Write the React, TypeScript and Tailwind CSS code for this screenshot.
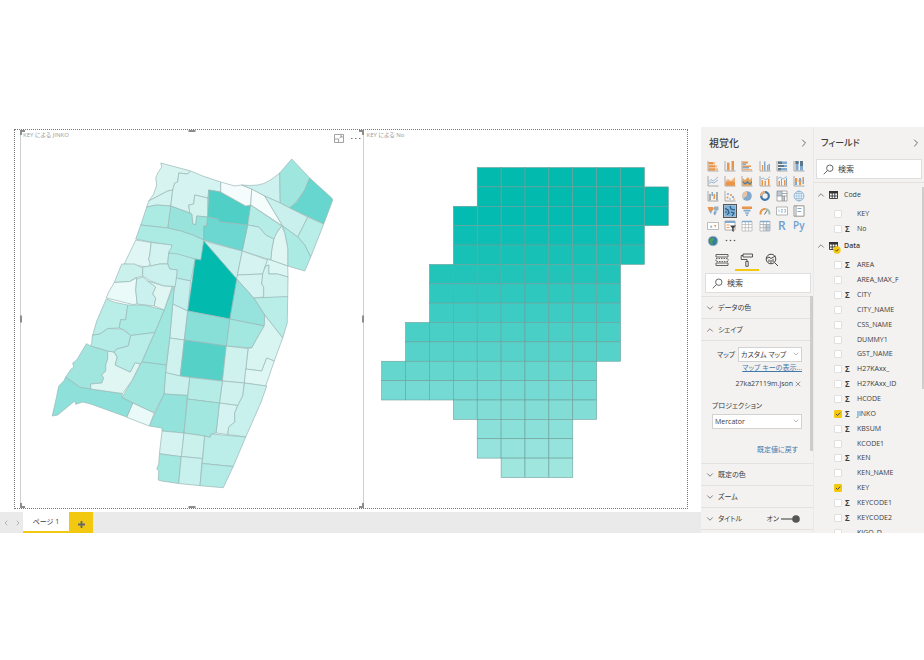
import type { ReactNode } from "react";
import { ChevronDown, ChevronLeft, ChevronRight, ChevronUp, X } from "lucide-react";

type Region = [fill: string, points: string];

// Town blocks, coloured by population
const regions: Region[] = [
  ["#d8f4f1", "160,163 190,171 187,174 178,173 177,182 174,183 172,190 167,191 148,201 153,194 156,185 155,178 157,173 161,167"],
  ["#d3f3f0", "148,201 167,191 172,190 170,206 156,205 146,207"],
  ["#d5f3f0", "190,171 202,176 220,182 220,192 208,190 207,198 194,195 193,204 188,205 189,213 170,206 172,190 174,183 177,182 178,173 187,174"],
  ["#d3f3ef", "194,195 207,198 207,217 196,216 195,225 192,224 191,214 189,213 188,205 193,204"],
  ["#98e4dd", "170,206 189,213 191,214 192,224 195,225 196,216 207,217 206,226 203,226 203,240 192,235 180,231 167,228 168,220"],
  ["#acebe4", "146,207 156,205 170,206 168,220 167,228 140,225 142,219"],
  ["#acebe4", "140,225 167,228 180,231 192,235 203,240 201,260 194,259 167,253 171,246 171,245 150,242 135,239"],
  ["#4fcfc6", "208,190 220,192 245,206 250,205 247,225 219,222 217,219 207,217"],
  ["#f5fcfc", "220,182 234,186 241,185 251,189 250,205 245,206 220,192"],
  ["#f5fcfc", "251,189 264,196 282,226 250,205"],
  ["#cdf1ee", "241,185 249,185.500 257,185 263,183.500 268,181 274,177 279,173 279.5,203 264,196 251,189"],
  ["#9fe6df", "279,173 291,159 309,178 304,190 296,201 289,208 279.5,203"],
  ["#66d6ce", "309,178 331,198 332,200 323,224 289,208 296,202 304,190"],
  ["#c9f0ed", "264,196 279.5,203 289,208 307,217 297,237 282,226"],
  ["#b9ede8", "307,217 323,224 310,257 304,245 297,237"],
  ["#acebe4", "282,226 297,237 304,245 310,257 304,271 287,266 287,248 284,233"],
  ["#dff6f3", "281,226 284,233 287,248 287,266 270,260 271,250 274,235"],
  ["#b5ece6", "250,205 281,226 277,231 273,239 265,235 258,227 247,225"],
  ["#c6f0ec", "247,225 258,227 265,235 273,239 271,250 270,260 241.5,251"],
  ["#6bd7d0", "207,217 217,219 219,222 247,225 241.5,251 203,240 203,226 206,226"],
  ["#e0f6f4", "135,240 150.5,242.5 149,255 148,259 150,264 146,267 134,265 123.5,264"],
  ["#d3f3f0", "150.5,242.5 171,245 171,247 168,252 167,264 159,264 150,266 148,259 149,255"],
  ["#b3ebe6", "168,253 177,254 194.5,259 190,281 175.5,278 176.5,270 169,269 167,264"],
  ["#c5efec", "175.5,278 190,281 187,311 172,304 173,292"],
  ["#d5f3f0", "172,304 187,311 183.5,340 169,338"],
  ["#cff2ee", "169,338 183.5,340 179.5,376 165,373"],
  ["#c6f0ec", "203,241 241.5,251 236,279"],
  ["#d5f3f0", "241.5,251 267,260 264,268 262,274 236.7,275"],
  ["#d5f3f0", "236.7,275 262,274 261,284 263,287 263,297 253,298 236,279"],
  ["#dcf6f3", "267,259 287,266 287.3,277 277,274 268,274 268,265 265,266 264,268"],
  ["#cff2ef", "264,268 265,266 268,265 268,274 277,274 287.3,277 287,297 263,298 263,287 261,284 262,274"],
  ["#b9ede8", "253,298 287,296.5 286.5,323 282,338 264,315"],
  ["#95e3dc", "236,279 253,298 264,315 264,326 229,319"],
  ["#a3e7e1", "229,319 263.5,326 257,337 251,348 225.5,346"],
  ["#d8f5f2", "264,315 282,338 273.5,361 266,358 261,371 245,369 247.5,348 251,348 257,337 263.5,326"],
  ["#02baae", "203,241 236,279 229,319 187,311 194.5,259 200,260"],
  ["#88dfd8", "187,311 229,319 225.5,346 183.7,340"],
  ["#55d1c8", "183.7,340 225.5,346 221.7,381 179.5,376"],
  ["#cff2ee", "225.5,346 247.3,348.5 243.7,383 221.7,381"],
  ["#dff7f4", "245,369 261,371 266,358 273.5,361 265,386 243.7,383"],
  ["#cff2ee", "221.7,381 243.7,383 242,396 237,405.5 218.7,403"],
  ["#d5f3f0", "218.7,403 237,405.5 234,413 234,422 228,427 227,434.5 215.3,433"],
  ["#c8f0ec", "243.7,383 266,386 260,403 245,437 227,434.5 228,427 234,422 234,413 237,405.5 242,396"],
  ["#b5ece6", "189,377.5 221.7,381 218.7,403 186.7,399"],
  ["#c8f0ec", "164.7,372.5 179.5,376 189,377.5 186.7,395.5 163.3,394"],
  ["#93e2db", "163.3,394 186.7,395.5 183.3,433 161.3,431 161.3,428 148.5,426"],
  ["#a1e7e0", "186.7,399 218.7,403 215.3,433 210.5,434 209.5,437.3 204,436 183.3,433"],
  ["#d5f3f0", "161.3,431 183.3,433 180.7,457 158.7,453.5"],
  ["#cbf1ed", "183.3,433 204,436 201.7,458.5 180.7,456.5"],
  ["#a3e7e1", "158.7,454 180.5,456.5 178,483.5 161,481 157.5,480 158,471 156,469 158,464"],
  ["#c8f0ec", "180.5,456.5 201.5,458.5 199.3,485.7 178,483.5"],
  ["#bbede9", "204,436 209.5,437.3 210.5,434 245,437 232.5,466.5 201.5,463.5"],
  ["#b3ebe6", "201.5,463.5 232.5,466.5 222.5,487.7 199.3,485.7"],
  ["#9fe6df", "174,282 172,304 169,338 165.5,365 141,362 154,332.5 163.5,310"],
  ["#9fe6df", "141,362 165.5,365 163.3,394 153.5,413 121.3,397.5 131,381"],
  ["#e9faf8", "132,403 153.5,413 148.5,426 126,417.3"],
  ["#8ee1da", "65,377 79,387 90,389 121.7,393.5 121,397.5 132,403 126,417 90,404 82,402 75,404.3 74,401 57,415 51.5,416 56,396 58,386 63,381"],
  ["#a0e6df", "85.7,343.7 90,346 107,351 107,359 105,365 105,371 101,375 103,378 101,383 90,384 90,389 79,387 65,377 70,369.5 73,367 72,363 76,360"],
  ["#dff6f3", "107,351 113,352 116.5,357 114.5,365 129.5,372 134.5,362.5 139.5,364 131,381 121.7,393.5 90,389 90,384 101,383 103,378 101,375 105,371 105,365 107,359"],
  ["#b3ebe6", "91.7,335 99,334 107,328.5 121,329 130,335.5 127.5,346 116,349 114,352 107,351 90,346 91,343"],
  ["#b9ede8", "105.5,299 113,302 127,305 125,320 120,319.5 118.5,328 107,328.5 99,334 92,335 96,321"],
  ["#acebe4", "127,305 143,305 163.5,310 154,332.5 130,335.5 124,330 118.5,328 120,319.5 125,320"],
  ["#b9ede8", "130,335.5 154,332.5 141,362 139.5,364 134.5,362.5 129.5,372 114.5,365 116.5,357 113.5,352 116,349 127.5,346"],
  ["#cbf1ed", "121,264 134,264 142,268 142,276 134,278 129,281.5 113.5,282.5"],
  ["#cbf1ee", "142,267 150,266 159,264 167,264 169,269 176.5,270 174.5,286.5 163,286 150,281 142,276"],
  ["#e9faf8", "113.5,282.5 129,281.5 136,278 135,290 136.5,304 132,304.5 118,301 105.5,298 108,292"],
  ["#cbf1ee", "136,279 142,277 155,287 152,294 155,298 153.5,306 136.5,304 135,290"],
  ["#dff6f3", "147,281 163,286 171.5,286.5 163.5,310 153.5,306 155,298 152,294 155,287"],
];

// Mesh map: fill, first column and one past the last column of each row
const meshRows: [string, number, number][] = [
  ["#02baae", 4, 11],
  ["#02baae", 4, 12],
  ["#03bbb0", 3, 12],
  ["#0cbeb3", 3, 11],
  ["#17c1b6", 3, 11],
  ["#22c4ba", 2, 10],
  ["#2fc8bf", 2, 10],
  ["#3dccc3", 2, 10],
  ["#4acfc6", 1, 10],
  ["#56d2ca", 1, 10],
  ["#65d6ce", 0, 9],
  ["#74dad3", 0, 9],
  ["#81ddd6", 3, 9],
  ["#8be0da", 4, 8],
  ["#95e3dc", 4, 8],
  ["#9fe6df", 5, 8],
];

const O = "#e8954a";
const B = "#7fa9cf";
const G = "#9a9a9a";
const axis = <path d="M1 1V11H11.500" fill="none" stroke={G} strokeWidth=".8" />;

const vizIcons: { name: string; art: ReactNode }[] = [
  { name: "積み上げ横棒グラフ", art: <>{axis}<path d="M1.500 2H6V4.500H1.500zM1.500 5.200H8V7.500H1.500zM1.500 8.200H8V10.500H1.500z" fill={O} /><path d="M6 2H8V4.500H6zM8 5.200H10V7.500H8zM8 8.200H11V10.500H8z" fill="#f2bd8d" /></> },
  { name: "積み上げ縦棒グラフ", art: <>{axis}<path d="M3 4H5.500V10.500H3zM7.500 1H10V7H7.500z" fill={O} /><path d="M3 2.500H5.500V4H3zM7.500 7H10V10.500H7.500z" fill="#c9a27a" /></> },
  { name: "集合横棒グラフ", art: <>{axis}<path d="M1.500 1.500H7V3.500H1.500zM1.500 5.500H10V7H1.500z" fill={O} /><path d="M1.500 3.500H5V5H1.500zM1.500 7H8V8.500H1.500z" fill={B} /><path d="M1.500 9H11V10.300H1.500z" fill="#f0b27b" /></> },
  { name: "集合縦棒グラフ", art: <>{axis}<path d="M3 5H4.200V10.500H3zM8 5H9.200V10.500H8z" fill={O} /><path d="M5 1.500H6.500V10.500H5zM9.500 4H11V10.500H9.500z" fill={B} /></> },
  { name: "100% 積み上げ横棒グラフ", art: <>{axis}<path d="M2 1.500H11V4H2zM2 5H11V7H2zM2 8H11V10.300H2z" fill={B} /><path d="M2 1.500H6V4H2zM2 5H8V7H2zM2 8H5V10.300H2z" fill="#5d7688" /></> },
  { name: "100% 積み上げ縦棒グラフ", art: <>{axis}<path d="M2.500 1H5.500V10.500H2.500zM7 1H10V10.500H7z" fill={B} /><path d="M2.500 1H5.500V4H2.500zM7 1H10V6H7z" fill="#5d7688" /></> },
  { name: "折れ線グラフ", art: <>{axis}<path d="M1.500 7L4 4.500 6.500 6 11 2M1.500 9L4 7 7 8 11 5" fill="none" stroke={B} strokeWidth=".8" /></> },
  { name: "面グラフ", art: <>{axis}<path d="M1.500 6L4 4 7 6 11 2V8H1.500z" fill="#f0b27b" /><path d="M1.500 7.500Q6 6 11 7V10.700H1.500z" fill={O} /></> },
  { name: "積み上げ面グラフ", art: <>{axis}<path d="M1.500 3L4 5 7 2 9 5 11 2V10.700H1.500z" fill="#e3a45f" /><path d="M1.500 6L4 8 6.500 6 9 8.500 11 6V7.500L9 10 6.500 8 4 9.500 1.500 7.500z" fill="#507b9e" /></> },
  { name: "折れ線および積み上げ縦棒グラフ", art: <>{axis}<path d="M2.500 5H4V10.500H2.500zM5.500 6H7V10.500H5.500zM9 4H10.500V10.500H9z" fill={O} /><path d="M1.500 4L4 3 7 5 11 1.500" fill="none" stroke={B} strokeWidth=".8" /></> },
  { name: "折れ線および集合縦棒グラフ", art: <>{axis}<path d="M2.500 6H4V10.500H2.500zM8 5H9.500V10.500H8z" fill={O} /><path d="M5 4H6V10.500H5zM10 3H11V10.500H10z" fill={B} /><path d="M1.500 4L4 2 7 4 11 1.500" fill="none" stroke={B} strokeWidth=".8" /></> },
  { name: "リボン グラフ", art: <>{axis}<path d="M2 3H4V7H2zM6 6H8V10H6zM9.500 2H11V5H9.500z" fill={O} /><path d="M2 7H4V10H2zM6 3H8V6H6zM9.500 5H11V9H9.500z" fill={B} /><path d="M4 4L6 7M8 7L9.500 4" stroke="#f2bd8d" /></> },
  { name: "ウォーターフォール図", art: <>{axis}<path d="M2 4H4V10.500H2zM9 2H11V10.500H9z" fill="#a3adb3" /><path d="M4.500 2H6V6H4.500z" fill={B} /><path d="M6.500 4H8V9H6.500z" fill={O} /></> },
  { name: "散布図", art: <>{axis}<g fill={B}><circle cx="4" cy="4" r="1" /><circle cx="9" cy="7" r="1.100" /><circle cx="6" cy="9" r=".8" /></g><g fill={O}><circle cx="3.500" cy="7.500" r="1" /><circle cx="7" cy="5" r="1" /><circle cx="10" cy="9" r=".8" /></g></> },
  { name: "円グラフ", art: <><circle cx="6" cy="6" r="4.800" fill={B} /><path d="M6 6V1.200A4.800 4.800 0 0 0 2 8.600z" fill="#ecc3a0" /></> },
  { name: "ドーナツ グラフ", art: <><circle cx="6" cy="6" r="3.800" fill="none" stroke="#3f78aa" strokeWidth="2.200" /><path d="M6 2.200A3.800 3.800 0 0 0 2.200 6" fill="none" stroke="#eab17e" strokeWidth="2.200" /></> },
  { name: "ツリーマップ", art: <><path d="M1 1H11V11H1z" fill="#fff" /><path d="M1 1H6V6H1zM6 6H8.500V11H6z" fill="#b9c9d8" /><path d="M1 1H11V11H1zM1 6H11M6 1V11M8.500 6V11M6 3.500H11" fill="none" stroke="#8a8a8a" strokeWidth=".7" /></> },
  { name: "マップ", art: <><circle cx="6" cy="6" r="4.900" fill="#eef5fa" stroke={B} strokeWidth=".8" /><path d="M1.300 6H10.700M6 1.300V10.700M2 3.500H10M2 8.500H10" stroke={B} strokeWidth=".5" /><ellipse cx="6" cy="6" rx="2.400" ry="4.900" fill="none" stroke={B} strokeWidth=".5" /></> },
  { name: "塗り分け地図", art: <><path d="M.5 2H6L7 4 5 6 2 6z" fill={O} /><path d="M2 6H5L4 9z" fill={B} /><path d="M7 1.500H11.500V5L9 6 7 5z" fill="#9bb0bf" /><path d="M7 6L10 6.500 8 10.500 6.500 9z" fill={B} /></> },
  { name: "図形マップ", art: <><path d="M.5 .5H11.500V11.500H.5z" fill="#7ab0dc" /><path d="M1 3.500L4 5 5 8 3 9.500M6 1L7 4 11 5M7 7L10 8 8 11M1 7H3" fill="none" stroke="#2d5474" strokeWidth="1.100" /></> },
  { name: "じょうごグラフ", art: <><path d="M1 1.500H11V4H1z" fill={O} /><path d="M2.500 4.700H9.500V6.500H2.500z" fill={B} /><path d="M4 7.200H8V8.700H4zM5 9.300H7V11H5z" fill="#8fb3d1" /></> },
  { name: "ゲージ", art: <><path d="M1.700 9.500A4.300 4.300 0 0 1 6 4" fill="none" stroke={O} strokeWidth="2" /><path d="M6 4A4.300 4.300 0 0 1 10.300 9.500" fill="none" stroke="#9fc0b0" strokeWidth="2" /><path d="M5.500 9.500L8 5.500" stroke="#555" strokeWidth=".9" /></> },
  { name: "カード", art: <><path d="M.5 2H11.500V10H.5z" fill="#fff" stroke="#9a9a9a" strokeWidth=".7" /><path d="M3 4.500V7M5 4.500H6.800L5 7H7M8 4.500H9.500V7H8" fill="none" stroke={B} strokeWidth=".7" /></> },
  { name: "複数の行カード", art: <><path d="M1 .8H11V11.200H1z" fill="#fff" stroke="#8a8a8a" strokeWidth=".9" /><path d="M3 .8V11.200" stroke="#8a8a8a" strokeWidth=".9" /><path d="M4.500 3.500H8.500M4.500 6.500H8" stroke={B} /></> },
  { name: "KPI", art: <><path d="M.5 2.500H11.500V9.500H.5z" fill="#fff" stroke="#a5a5a5" strokeWidth=".7" /><path d="M2.800 7.500L4.200 5 5.500 7.500z" fill={B} /><path d="M7 5L8.200 7.500 9.400 5z" fill={O} /></> },
  { name: "スライサー", art: <><path d="M1 1H11V10H1z" fill="#fff" stroke={G} strokeWidth=".8" /><path d="M1 1H11V3H1z" fill={B} /><path d="M2.500 5H5.500M2.500 7.500H5.500" stroke={O} /><path d="M6 5.500H12L9.700 8.200V12L8.200 11V8.200z" fill="#444" /></> },
  { name: "テーブル", art: <><path d="M1 1.500H11V11H1zM1 4.500H11M1 7.700H11M4.300 1.500V11M7.600 1.500V11" fill="#fff" stroke="#b0b0b0" strokeWidth=".7" /><path d="M1 .8H11V2.200H1z" fill={B} /></> },
  { name: "マトリックス", art: <><path d="M1 1.500H11V11H1z" fill="#fff" /><path d="M5.500 4.500H11V11H5.500z" fill="#b7d3ea" /><path d="M1 1.500H11V11H1zM1 4.500H11M1 7.700H11M4.300 1.500V11M7.600 1.500V11" fill="none" stroke="#a3a3a3" strokeWidth=".7" /><path d="M1 .8H11V2.200H1z" fill={B} /></> },
  { name: "R スクリプト", art: <text x="2" y="10" className="font-['Open_Sans',sans-serif] text-[12px] font-semibold" fill="#6f9fd0">R</text> },
  { name: "Python スクリプト", art: <text x="0" y="9" className="font-['Open_Sans',sans-serif] text-[10px] font-semibold" fill="#6f9fd0">Py</text> },
  { name: "ArcGIS Maps", art: <><circle cx="6" cy="6" r="4.800" fill="#3679a5" stroke="#a8bcc6" strokeWidth=".8" /><path d="M3 3.500L6.500 2.500 7.500 5 5 6.500 6 9 4 9.500 2.500 6zM8 6L10 5.500 9 8.500z" fill="#4d9e5e" /></> },
  { name: "その他", art: <g fill="#555"><circle cx="2.500" cy="5.500" r=".8" /><circle cx="6.500" cy="5.500" r=".8" /><circle cx="10.500" cy="5.500" r=".8" /></g> },
];

type Field = { name: string; sum?: boolean; on?: boolean };

const codeFields: Field[] = [{ name: "KEY" }, { name: "No", sum: true }];

const dataFields: Field[] = [
  { name: "AREA", sum: true },
  { name: "AREA_MAX_F" },
  { name: "CITY", sum: true },
  { name: "CITY_NAME" },
  { name: "CSS_NAME" },
  { name: "DUMMY1" },
  { name: "GST_NAME" },
  { name: "H27KAxx_", sum: true },
  { name: "H27KAxx_ID", sum: true },
  { name: "HCODE", sum: true },
  { name: "JINKO", sum: true, on: true },
  { name: "KBSUM", sum: true },
  { name: "KCODE1" },
  { name: "KEN", sum: true },
  { name: "KEN_NAME" },
  { name: "KEY", on: true },
  { name: "KEYCODE1", sum: true },
  { name: "KEYCODE2", sum: true },
  { name: "KIGO_D" },
];

const SearchBox = ({ label }: { label: string }) => (
  <label className="flex h-5 items-center gap-1 border border-[#dedede] bg-white px-1.5">
    <svg viewBox="0 0 11 11" className="size-[11px] shrink-0" fill="none" stroke="#555" strokeWidth=".9" aria-hidden="true">
      <circle cx="6.800" cy="4.200" r="3.200" />
      <path d="M4.500 6.500L.7 10.300" />
    </svg>
    <input
      type="search"
      aria-label={label}
      placeholder="検索"
      className="w-full min-w-0 bg-transparent text-[8px] leading-3 outline-none placeholder:text-[#444]"
    />
  </label>
);

const FieldRow = ({ field, table }: { field: Field; table: string }) => {
  const id = `${table}-${field.name}`;
  return (
    <li className="flex items-center pl-5">
      <span className="relative flex size-2">
        <input
          id={id}
          type="checkbox"
          defaultChecked={field.on}
          className="peer size-2 appearance-none rounded-[1px] border border-[#e0e0e0] bg-white checked:border-[#f2c811] checked:bg-[#f2c811]"
        />
        <svg viewBox="0 0 8 8" className="pointer-events-none absolute inset-0 hidden size-2 peer-checked:block" aria-hidden="true">
          <path d="M2 4L3.500 5.500 6.200 2.700" fill="none" stroke="#444" strokeWidth=".9" />
        </svg>
      </span>
      <span className="w-[15px] pl-[3px] text-[8px] font-bold leading-3" aria-hidden="true">{field.sum && "Σ"}</span>
      <label htmlFor={id} className="text-[7px] leading-3">{field.name}</label>
    </li>
  );
};

const TableHeading = ({ name, used }: { name: string; used?: boolean }) => (
  <button type="button" aria-expanded="true" className="flex w-full items-center pl-0.5 text-[7px] leading-3">
    <ChevronUp className="size-2.5" strokeWidth={1.5} aria-hidden="true" />
    <span className="relative ml-[3px] mr-1.5">
      <svg viewBox="0 0 9 8" className="h-2 w-[9px]" aria-hidden="true">
        <path d="M.5 .5H8.500V7.500H.5zM.5 5H8.500M3.200 2V7.500M5.800 2V7.500" fill="#fff" stroke="#333" strokeWidth=".9" />
        <path d="M0 0H9V2.500H0z" fill="#333" />
      </svg>
      {used && (
        <svg viewBox="0 0 8 8" className="absolute left-1 top-1 size-2" aria-hidden="true">
          <circle cx="4" cy="4" r="3.700" fill="#f2c811" />
          <path d="M2.500 4L3.600 5.200 5.600 3" fill="none" stroke="#444" strokeWidth=".9" />
        </svg>
      )}
    </span>
    <span className={used ? "font-semibold" : ""}>{name}</span>
  </button>
);

const Section = ({ title, open, children }: { title: string; open?: boolean; children?: ReactNode }) => (
  <div className="flex h-[22px] shrink-0 items-center justify-between border-t border-[#e3e2e1] pl-1 pr-3">
    <button type="button" aria-expanded={!!open} className="flex items-center gap-[3px] text-[7px] leading-3">
      {open ? <ChevronUp className="size-2.5" strokeWidth={1.5} /> : <ChevronDown className="size-2.5" strokeWidth={1.5} />}
      {title}
    </button>
    {children}
  </div>
);

const SelectBox = ({ id, value }: { id: string; value: string }) => (
  <div className="relative min-w-0 flex-1">
    <select id={id} defaultValue={value} className="block h-[15px] w-full appearance-none border border-[#d2d2d2] bg-white pl-0.5 pr-3 text-[7px] leading-3">
      <option>{value}</option>
    </select>
    <ChevronDown className="pointer-events-none absolute right-0.5 top-[3px] size-2 text-[#777]" strokeWidth={1.5} aria-hidden="true" />
  </div>
);

const Handles = () => (
  <div className="pointer-events-none absolute -inset-x-px inset-y-0" aria-hidden="true">
    <i className="absolute left-0 top-0 size-[5px] border-l-2 border-t-2 border-[#8c8c8c]" />
    <i className="absolute right-0 top-0 size-[5px] border-r-2 border-t-2 border-[#8c8c8c]" />
    <i className="absolute bottom-0 left-0 size-[5px] border-b-2 border-l-2 border-[#8c8c8c]" />
    <i className="absolute bottom-0 right-0 size-[5px] border-b-2 border-r-2 border-[#8c8c8c]" />
    <i className="absolute left-1/2 top-0 h-0.5 w-[7px] -translate-x-1/2 bg-[#8c8c8c]" />
    <i className="absolute bottom-0 left-1/2 h-0.5 w-[7px] -translate-x-1/2 bg-[#8c8c8c]" />
    <i className="absolute left-0 top-1/2 h-[7px] w-0.5 -translate-y-1/2 bg-[#8c8c8c]" />
    <i className="absolute right-0 top-1/2 h-[7px] w-0.5 -translate-y-1/2 bg-[#8c8c8c]" />
  </div>
);

const Canvas = () => (
  <div className="flex min-h-0 flex-1 border border-dotted border-[#777] pl-[5px]">
    <section className="relative flex min-w-0 flex-[344] flex-col border-x border-[#cfcfcf]">
      <Handles />
      <header className="flex h-4 items-start justify-between pl-0.5 pr-0.5">
        <h2 className="text-[6px] leading-[10px] text-[#9a9a9a]">KEY による JINKO</h2>
        <div className="flex items-center gap-[7px] pt-1">
          <button type="button" aria-label="フォーカス モード">
            <svg viewBox="0 0 10 9" className="h-[9px] w-2.5" aria-hidden="true">
              <path d="M.5 .5H9.500V8.500H.5zM.5 5H4.500V8.500M5.500 4L8 2M6 2H8V4" fill="none" stroke="#999" strokeWidth=".9" />
            </svg>
          </button>
          <button type="button" aria-label="その他のオプション">
            <svg viewBox="0 0 10 3" className="h-[3px] w-2.5" aria-hidden="true">
              <path d="M0 1.500H1.500M4 1.500H5.500M8 1.500H9.500" stroke="#777" strokeWidth="1.200" />
            </svg>
          </button>
        </div>
      </header>
      <svg viewBox="21 146 341 362" className="min-h-0 w-full flex-1" role="img" aria-label="KEY による JINKO">
        <g stroke="#9ab8b6" strokeWidth=".7" strokeLinejoin="round">
          {regions.map(([fill, points], i) => (
            <polygon key={i} fill={fill} points={points} />
          ))}
        </g>
      </svg>
    </section>
    <section className="flex min-w-0 flex-[324] flex-col">
      <header className="h-4 pl-0.5">
        <h2 className="text-[6px] leading-[10px] text-[#9a9a9a]">KEY による No</h2>
      </header>
      <svg viewBox="364 147 323 362" className="min-h-0 w-full flex-1" role="img" aria-label="KEY による No">
        <g stroke="#6f9f9b" strokeWidth=".6">
          {meshRows.map(([fill, from, to], row) =>
            Array.from({ length: to - from }, (_, i) => (
              <rect
                key={`${row}-${i}`}
                x={381.7 + (from + i) * 23.92}
                y={168.3 + row * 19.4}
                width="23.920"
                height="19.400"
                fill={fill}
              />
            ))
          )}
        </g>
      </svg>
    </section>
  </div>
);

const PageTabs = () => (
  <nav className="flex h-[21px] bg-[#eaeaea]" aria-label="ページ">
    <div className="flex w-[23px] items-center justify-center gap-1 text-[#999]">
      <button type="button" aria-label="前のページ"><ChevronLeft className="size-2" /></button>
      <button type="button" aria-label="次のページ"><ChevronRight className="size-2" /></button>
    </div>
    <button type="button" className="w-[46px] border-b-2 border-[#f2c811] bg-white text-[7px] leading-3">ページ 1</button>
    <button type="button" aria-label="新しいページ" className="flex w-6 items-center justify-center bg-[#f2c811] pt-1">
      <svg viewBox="0 0 7 7" className="size-[7px]" aria-hidden="true">
        <path d="M3.500 0V7M0 3.500H7" stroke="#666" strokeWidth="1.800" />
      </svg>
    </button>
  </nav>
);

const Visualizations = () => (
  <aside className="flex w-28 shrink-0 flex-col bg-[#f3f2f1]">
    <header className="flex h-8 shrink-0 items-center justify-between pl-2 pr-[3px]">
      <h2 className="text-[10px] font-medium leading-4">視覚化</h2>
      <button type="button" aria-label="視覚化を折りたたむ"><ChevronRight className="size-3" strokeWidth={1.5} /></button>
    </header>
    <div className="grid h-[89px] shrink-0 grid-cols-6 grid-rows-6 pl-[3px] pr-[5px]">
      {vizIcons.map((icon) => (
        <button
          key={icon.name}
          type="button"
          aria-label={icon.name}
          className={
            icon.name === "図形マップ"
              ? "flex size-[14px] items-center justify-center place-self-center border border-[#555] bg-[#c9c9c9]"
              : "flex items-center justify-center"
          }
        >
          <svg viewBox="0 0 12 12" className="size-3 overflow-visible" aria-hidden="true">{icon.art}</svg>
        </button>
      ))}
    </div>
    <div className="flex h-[23px] shrink-0 items-end gap-px pl-[9px]">
      <button type="button" aria-label="フィールド" className="flex h-[22px] w-6 justify-center pt-1">
        <svg viewBox="0 0 14 14" className="size-3.5" fill="none" stroke="#555" strokeWidth=".9" aria-hidden="true">
          <path d="M1 4V1.500H13V4M1 10V12.500H13V10M1 10H13M1 4H13" />
          <path d="M1 5.500H13V8.500H1z" strokeDasharray="1.500 1" />
        </svg>
      </button>
      <button type="button" aria-label="書式" className="flex h-[22px] w-6 justify-center border-b-2 border-[#f2c811] pt-1">
        <svg viewBox="0 0 14 14" className="size-3.5" fill="none" stroke="#444" strokeWidth=".9" aria-hidden="true">
          <path d="M3 1H12.500V4H3zM3 2.500H1.200V6.500H7V8.500M5.800 8.500H8.200V13.300H5.800z" />
        </svg>
      </button>
      <button type="button" aria-label="分析" className="flex h-[22px] w-6 justify-center pt-1">
        <svg viewBox="0 0 14 14" className="size-3.5" fill="none" stroke="#444" strokeWidth="1" aria-hidden="true">
          <circle cx="6" cy="6" r="4.800" />
          <path d="M9.500 9.500L13 13M1.500 5.500L4 4 6 5.500 10.500 3M4 6.500V9M6 7V10M8 6V9" />
        </svg>
      </button>
    </div>
    <div className="shrink-0 pb-[3px] pl-1 pr-0.5 pt-0.5"><SearchBox label="書式の検索" /></div>
    <div className="relative flex min-h-0 flex-1 flex-col overflow-hidden">
      <i className="absolute right-0 top-0 h-[155px] w-[3px] bg-[#cfcdcc]" aria-hidden="true" />
      <Section title="データの色" />
      <Section title="シェイプ" open />
      <div className="flex h-[123px] shrink-0 flex-col border-t border-[#e3e2e1] pl-[11px] pr-[11px] pt-1.5 text-[7px] leading-3">
        <div className="flex items-center gap-1 pl-[5px]">
          <label htmlFor="map" className="w-[17px] whitespace-nowrap">マップ</label>
          <SelectBox id="map" value="カスタム マップ" />
        </div>
        <a href="#keys" className="self-end text-[#4478a8] underline">マップ キーの表示...</a>
        <div className="mt-1 flex items-center justify-end gap-px">
          27ka27119m.json
          <button type="button" aria-label="削除"><X className="size-2" strokeWidth={1.5} /></button>
        </div>
        <label htmlFor="projection" className="mt-2.5">プロジェクション</label>
        <div className="flex pt-0.5"><SelectBox id="projection" value="Mercator" /></div>
        <button type="button" className="mr-1 mt-[15px] self-end text-[#4478a8]">既定値に戻す</button>
      </div>
      <Section title="既定の色" />
      <Section title="ズーム" />
      <Section title="タイトル">
        <label className="flex items-center gap-0.5 pr-px text-[7px] leading-3">
          オン
          <input type="checkbox" role="switch" defaultChecked className="sr-only" />
          <svg viewBox="0 0 19 8" className="h-2 w-[19px]" aria-hidden="true">
            <path d="M0 4H14" stroke="#555" strokeWidth="1.200" />
            <circle cx="15" cy="4" r="3.800" fill="#555" />
          </svg>
        </label>
      </Section>
      <div className="shrink-0 border-t border-[#e3e2e1]" />
    </div>
  </aside>
);

const Fields = () => (
  <aside className="relative flex w-[111px] shrink-0 flex-col overflow-hidden border-l border-[#eae9e8] bg-[#f3f2f1]">
    <header className="flex h-[31px] shrink-0 items-center justify-between pl-[7px] pr-0.5">
      <h2 className="text-[9px] font-medium leading-4">フィールド</h2>
      <button type="button" aria-label="フィールドを折りたたむ"><ChevronRight className="size-3" strokeWidth={1.5} /></button>
    </header>
    <div className="shrink-0 border-b border-[#e3e2e1] px-0.5 pb-[3px] pt-px"><SearchBox label="フィールドの検索" /></div>
    <i className="absolute right-0 top-[60px] h-[202px] w-0.5 bg-[#cfcdcc]" aria-hidden="true" />
    <div className="shrink-0 pt-1.5">
      <TableHeading name="Code" />
      <ul className="grid h-[39px] grid-rows-2 pb-1 pt-[5px]">
        {codeFields.map((field) => <FieldRow key={field.name} field={field} table="code" />)}
      </ul>
      <TableHeading name="Data" used />
      <ul className="mt-1.5 grid h-[282px] auto-rows-fr">
        {dataFields.map((field) => <FieldRow key={field.name} field={field} table="data" />)}
      </ul>
    </div>
  </aside>
);

export default function App() {
  return (
    <div className="min-h-screen bg-white pt-[127px] font-['Open_Sans','Noto_Sans_CJK_JP',sans-serif] text-[#3c3c3c] [font-feature-settings:'palt']">
      <div className="flex h-[406px]">
        <main className="flex min-w-0 flex-1 flex-col">
          <div className="flex min-h-0 flex-1 flex-col pb-[3px] pl-3.5 pr-[13px] pt-0.5">
            <Canvas />
          </div>
          <PageTabs />
        </main>
        <Visualizations />
        <Fields />
      </div>
    </div>
  );
}
